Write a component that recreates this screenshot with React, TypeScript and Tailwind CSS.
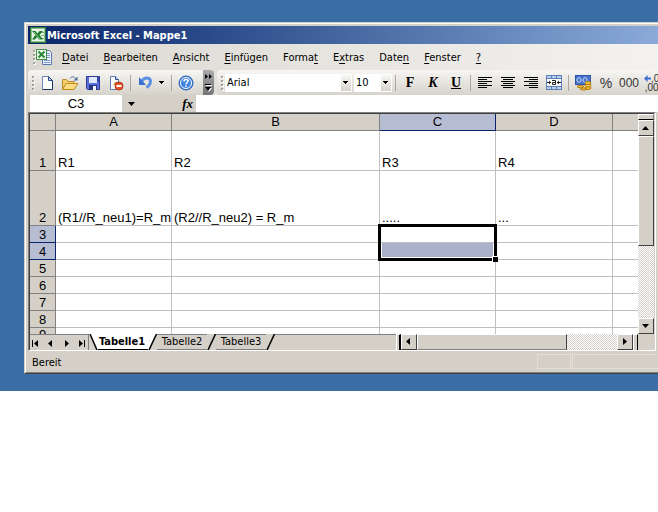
import React from "react";

const ExcelLogo = () => (
    <svg width="16" height="16" viewBox="0 0 16 16">
        <rect x="0.5" y="0.5" width="15" height="15" fill="#e9f4e6" stroke="#2f7d38" />
        <rect x="1.500" y="1.500" width="13" height="13" fill="none" stroke="#8dc48c" />
        <path d="M11 5.500h3M11 8.500h3M11 11.500h3" stroke="#6fae70" />
        <path d="M2 4h3.500L7.500 6.500 9.500 4H13L9.500 8l3.500 4.500H9L7 10l-2 2.500H2L5.500 8z" fill="#1f7a2c" />
        <path d="M4 5l6 7" stroke="#9ad79a" />
    </svg>
);

const WorkbookIcon = () => (
    <svg width="17" height="16" viewBox="0 0 17 16">
        <path d="M6.500 1.500h7l2 2v12h-9z" fill="#e8effb" stroke="#5a76b5" />
        <path d="M11 4.500h3M11 6.500h3M11 8.500h3M8 11.500h6M8 13.500h6" stroke="#7f9bd0" />
        <rect x="0.5" y="0.5" width="10" height="10" fill="#eef7ec" stroke="#3f8f47" />
        <path d="M2.500 2.500l6 6M8.500 2.500l-6 6" stroke="#2a8a35" strokeWidth="2" />
    </svg>
);

const NewIcon = () => (
    <svg width="16" height="16" viewBox="0 0 16 16">
        <path d="M3.500 1.500h6l4 4v9h-10z" fill="#fbfdff" stroke="#6f86b8" />
        <path d="M13.500 5.500v9h-10" fill="none" stroke="#1d3260" />
        <path d="M9.500 1.500v4h4z" fill="#b9cdee" stroke="#2d4a86" />
    </svg>
);

const OpenIcon = () => (
    <svg width="18" height="16" viewBox="0 0 18 16">
        <path d="M1.500 14.500v-10h4l1.500 2h6v2" fill="#f3cf6c" stroke="#b98a28" />
        <path d="M1.500 14.500l3.500-6h12l-4 6z" fill="#fbdc83" stroke="#c08a20" />
        <path d="M9 3.500c2-2.500 4-2 5.500 0" fill="none" stroke="#4a6a9a" />
        <path d="M16.500 1.500v4h-4z" fill="#4a6a9a" />
    </svg>
);

const SaveIcon = () => (
    <svg width="16" height="16" viewBox="0 0 16 16">
        <path d="M1.500 1.500h13v13h-12l-1-1z" fill="#5a6fd8" stroke="#2d3a96" />
        <rect x="4" y="2" width="8" height="6" fill="#dfe7fb" />
        <path d="M12 2h2v5h-2z" fill="#3548b5" />
        <rect x="4" y="10" width="8" height="5" fill="#27347f" />
        <rect x="8" y="11" width="3" height="4" fill="#f5f7ff" />
    </svg>
);

const PermissionIcon = () => (
    <svg width="16" height="16" viewBox="0 0 16 16">
        <path d="M2.500 1.500h5l3 3v10h-8z" fill="#fbfdff" stroke="#5f7db4" />
        <path d="M7.500 1.500v3h3" fill="#c5d6f0" stroke="#2d4a86" />
        <path d="M6 10c0-3 4-4 5-1" fill="#ebc24a" stroke="#b98a28" />
        <circle cx="11" cy="11" r="4" fill="#e0532c" stroke="#b8371a" />
        <path d="M8.500 11h5" stroke="#fff" strokeWidth="2" />
    </svg>
);

const UndoIcon = () => (
    <svg width="16" height="16" viewBox="0 0 16 16">
        <path d="M5 6c2-4 8-4 8.500 0 0 3-1.500 5-4 6.500" fill="none" stroke="#5b8fe3" strokeWidth="3" />
        <path d="M2 2v8h7z" fill="#3a70d2" />
    </svg>
);

const HelpIcon = () => (
    <svg width="16" height="16" viewBox="0 0 16 16">
        <circle cx="8" cy="8" r="7" fill="#3f82e0" stroke="#2a5fb5" />
        <circle cx="8" cy="8" r="5.500" fill="none" stroke="#fff" />
        <path d="M6 6.500c0-3 4-2.500 4-.5 0 1.500-2 1.500-2 3.500M8 10.500v1.500" fill="none" stroke="#fff" strokeWidth="1.500" />
    </svg>
);

const MergeIcon = () => (
    <svg width="16" height="16" viewBox="0 0 16 16">
        <rect x="0.5" y="0.5" width="15" height="14" fill="#b9cdec" stroke="#5f7fb8" />
        <path d="M5.500 1v3M10.500 1v3M5.500 11v4M10.500 11v4M1 3.500h14M1 11.500h14" stroke="#5f7fb8" />
        <rect x="1" y="4" width="14" height="7" fill="#fff" />
        <path d="M1 7.500h4M11 7.500h4" stroke="#222" />
        <path d="M3 5.500v4l2-2zM13 5.500v4l-2-2z" fill="#222" />
        <path d="M6 5.500h3.500v4M9.500 7.500h-3v2h3" fill="none" stroke="#222" />
    </svg>
);

const CurrencyIcon = () => (
    <svg width="18" height="16" viewBox="0 0 18 16">
        <rect x="1.500" y="0.5" width="15" height="9" fill="#4a74cc" stroke="#2f55ab" />
        <path d="M3 5c0-3 4-3 4 0s-4 3-4 0M9 5c0-3 4-3 4 0s-4 3-4 0" fill="none" stroke="#c9dbfa" />
        <g fill="#f7c83e" stroke="#b27b12">
            <ellipse cx="14" cy="13" rx="3" ry="1.500" />
            <ellipse cx="14" cy="10.500" rx="3" ry="1.500" />
            <ellipse cx="14" cy="8" rx="3" ry="1.500" />
            <ellipse cx="6.500" cy="11.500" rx="3.500" ry="1" />
            <ellipse cx="9.500" cy="14" rx="3.500" ry="1" />
        </g>
    </svg>
);

const AlignIcon = ({ d }: { d: string }) => (
    <svg width="16" height="12" viewBox="0 0 16 12" shapeRendering="crispEdges">
        <path d={d} stroke="#000" />
    </svg>
);

const Arrow = ({ dir }: { dir: "up" | "down" | "left" | "right" }) => {
    const shapes = {
        up: "M0 6h7L3.500 2z",
        down: "M0 2h7L3.500 6z",
        left: "M5 0v7L1 3.500z",
        right: "M2 0v7l4-3.500z",
    };
    return (
        <svg width="7" height="7" viewBox="0 0 7 7">
            <path d={shapes[dir]} />
        </svg>
    );
};

const SmallArrow = () => (
    <svg width="6" height="4" viewBox="0 0 6 4" shapeRendering="crispEdges">
        <path d="M0 0h5v1H4v1H3v1H2V2H1V1H0z" />
    </svg>
);

const Grip = () => (
    <svg width="3" height="16" viewBox="0 0 3 16" shapeRendering="crispEdges" className="shrink-0">
        <path d="M1 2h2v2H1zM1 6h2v2H1zM1 10h2v2H1zM1 14h2v2H1z" fill="#fff" />
        <path d="M0 1h2v2H0zM0 5h2v2H0zM0 9h2v2H0zM0 13h2v2H0z" fill="#a3a198" />
    </svg>
);

const Separator = () => <div className="mr-[2px] ml-[3px] h-4 w-px shrink-0 bg-[#a8a69c]" />;

const ToolButton = ({ label, children }: { label: string; children: React.ReactNode }) => (
    <button aria-label={label} className="flex h-6 w-[23px] shrink-0 items-center justify-center pl-px">
        {children}
    </button>
);

const ScrollButton = ({ label, dir }: { label: string; dir: "up" | "down" | "left" | "right" }) => (
    <button
        aria-label={label}
        className="flex h-4 w-4 shrink-0 items-center justify-center border border-t-white border-r-[#404040] border-b-[#404040] border-l-white bg-[#d4d0c8] pr-px pb-px"
    >
        <Arrow dir={dir} />
    </button>
);

const menuItems = [
    ["", "D", "atei"],
    ["", "B", "earbeiten"],
    ["", "A", "nsicht"],
    ["", "E", "infügen"],
    ["Forma", "t", ""],
    ["E", "x", "tras"],
    ["Date", "n", ""],
    ["", "F", "enster"],
    ["", "?", ""],
];

const columns = ["A", "B", "C", "D", ""];

const rows = [
    { height: "h-10", cells: ["R1", "R2", "R3", "R4", ""] },
    { height: "h-[55px]", cells: ["(R1//R_neu1)=R_m", "(R2//R_neu2) = R_m", ".....", "...", ""] },
    { height: "h-[17px]", cells: ["", "", "", "", ""], selected: true },
    { height: "h-[17px]", cells: ["", "", "", "", ""], selected: true },
    { height: "h-[17px]", cells: ["", "", "", "", ""] },
    { height: "h-[17px]", cells: ["", "", "", "", ""] },
    { height: "h-[17px]", cells: ["", "", "", "", ""] },
    { height: "h-[17px]", cells: ["", "", "", "", ""] },
];

// Frame around C3:C4, anchored in C3
const Selection = () => (
    <div className="absolute -top-[2px] -left-[2px] z-10 h-[37px] w-[119px] border-3 border-black">
        <div className="h-4 border-b border-[#c0c0c0] bg-white" />
        <div className="h-[15px] border border-t-0 border-white bg-[#a9b1cb]" />
        <div className="absolute -right-1 -bottom-1 h-[6px] w-[6px] border-t border-l border-white bg-black" />
    </div>
);

const TitleBar = () => (
    <div className="flex h-[18px] items-center gap-px bg-linear-to-r from-[#0a246a] to-[#8aabd8] pl-[2px] text-white">
        <ExcelLogo />
        <h1 className="pt-[2px] font-bold">Microsoft Excel - Mappe1</h1>
    </div>
);

const MenuBar = () => (
    <nav className="flex h-[26px] items-center bg-linear-to-r from-[#dbd8d1] to-[#f3f2ef] pl-[5px]">
        <Grip />
        <WorkbookIcon />
        <div className="flex gap-[15px] pt-[2px] pl-[9px]">
            {menuItems.map(([before, key, after]) => (
                <button key={before + key + after} className="whitespace-nowrap">
                    {before}
                    <span className="underline underline-offset-2">{key}</span>
                    {after}
                </button>
            ))}
        </div>
    </nav>
);

const Toolbars = () => (
    <div className="flex h-[25px] bg-linear-to-r from-[#dbd8d1] to-[#f3f2ef]">
        <div className="flex shrink-0 items-center rounded-l bg-linear-to-b from-[#f7f6f4] to-[#d6d3cb] pt-px pl-1">
            <Grip />
            <ToolButton label="Neu"><NewIcon /></ToolButton>
            <ToolButton label="Öffnen"><OpenIcon /></ToolButton>
            <ToolButton label="Speichern"><SaveIcon /></ToolButton>
            <ToolButton label="Berechtigung"><PermissionIcon /></ToolButton>
            <Separator />
            <ToolButton label="Rückgängig"><UndoIcon /></ToolButton>
            <button aria-label="Rückgängig Liste" className="flex h-6 w-3 items-center justify-center">
                <SmallArrow />
            </button>
            <Separator />
            <ToolButton label="Hilfe"><HelpIcon /></ToolButton>
            <div className="w-[6px]" />
        </div>
        <button
            aria-label="Optionen für Symbolleisten"
            className="flex w-[11px] shrink-0 flex-col items-center justify-between rounded-r bg-linear-to-b from-[#a9a9a9] to-[#747474] pt-1 pb-[3px]"
        >
            <svg width="7" height="5" viewBox="0 0 7 5">
                <path d="M0 0l3 2.500L0 5zM4 0l3 2.500L4 5z" />
            </svg>
            <svg width="7" height="8" viewBox="0 0 7 8">
                <path d="M1 1h6v1H1zM1 4h6L4 8z" fill="#fff" />
                <path d="M0 0h6v1H0zM0 3h6L3 7z" />
            </svg>
        </button>
        <div className="ml-[3px] flex min-w-0 flex-1 items-center overflow-hidden rounded-l bg-linear-to-b from-[#f7f6f4] to-[#d6d3cb] pt-px pl-1">
            <Grip />
            <div className="relative ml-px shrink-0">
                <select aria-label="Schriftart" className="block h-[18px] w-[127px] appearance-none bg-white pl-[2px]">
                    <option>Arial</option>
                </select>
                <span className="pointer-events-none absolute top-px right-px flex h-4 w-[10px] items-center justify-center bg-linear-to-b from-[#f7f6f4] to-[#d6d3cb]">
                    <SmallArrow />
                </span>
            </div>
            <div className="relative ml-[2px] shrink-0">
                <select aria-label="Schriftgrad" className="block h-[18px] w-[38px] appearance-none bg-white pl-[2px]">
                    <option>10</option>
                </select>
                <span className="pointer-events-none absolute top-px right-px flex h-4 w-[10px] items-center justify-center bg-linear-to-b from-[#f7f6f4] to-[#d6d3cb]">
                    <SmallArrow />
                </span>
            </div>
            <Separator />
            <div className="flex font-['Liberation_Serif',serif] text-sm font-bold">
                <ToolButton label="Fett">F</ToolButton>
                <ToolButton label="Kursiv"><i>K</i></ToolButton>
                <ToolButton label="Unterstrichen"><u>U</u></ToolButton>
            </div>
            <Separator />
            <ToolButton label="Linksbündig">
                <AlignIcon d="M1 .5h14M1 2.500h9M1 4.500h14M1 6.500h9M1 8.500h14M1 10.500h9" />
            </ToolButton>
            <ToolButton label="Zentriert">
                <AlignIcon d="M1 .5h14M3 2.500h10M1 4.500h14M3 6.500h10M1 8.500h14M3 10.500h10" />
            </ToolButton>
            <ToolButton label="Rechtsbündig">
                <AlignIcon d="M1 .5h14M6 2.500h9M1 4.500h14M6 6.500h9M1 8.500h14M6 10.500h9" />
            </ToolButton>
            <ToolButton label="Verbinden und zentrieren"><MergeIcon /></ToolButton>
            <Separator />
            <ToolButton label="Währung"><CurrencyIcon /></ToolButton>
            <div className="flex font-['Liberation_Sans_Narrow','Liberation_Sans',sans-serif] text-[#333]">
                <ToolButton label="Prozentformat">
                    <span className="text-sm">%</span>
                </ToolButton>
                <ToolButton label="1.000er-Trennzeichen">
                    <span className="text-xs">000</span>
                </ToolButton>
                <button
                    aria-label="Dezimalstelle hinzufügen"
                    className="ml-1 flex shrink-0 flex-col justify-center text-[10px] leading-[9px]"
                >
                    <span className="flex items-center">
                        <svg width="7" height="7" viewBox="0 0 7 7">
                            <path d="M0 3.500L3.500 0v2.500H7v2H3.500V7z" fill="#3a6fd0" />
                        </svg>
                        ,0
                    </span>
                    <span>,00</span>
                </button>
            </div>
        </div>
    </div>
);

const FormulaBar = () => (
    <div className="flex h-[17px] pl-[2px]">
        <input
            aria-label="Namenfeld"
            defaultValue="C3"
            className="w-[92px] bg-white text-center font-['Liberation_Sans',sans-serif] text-[13px]"
        />
        <button aria-label="Namen" className="flex w-[18px] items-center justify-center">
            <Arrow dir="down" />
        </button>
        <button
            aria-label="Funktion einfügen"
            className="w-14 pr-[3px] text-right font-['Liberation_Serif',serif] text-[13px] leading-4 font-bold italic"
        >
            fx
        </button>
        <input aria-label="Bearbeitungsleiste" className="min-w-0 flex-1 bg-white" />
    </div>
);

const Sheet = () => (
    <table className="w-full table-fixed border-separate border-spacing-0 bg-white font-['Liberation_Sans',sans-serif] text-[13px] leading-[14px]">
        <colgroup>
            <col className="w-[26px]" />
            <col className="w-[116px]" />
            <col className="w-[208px]" />
            <col className="w-[116px]" />
            <col className="w-[117px]" />
            <col />
        </colgroup>
        <thead>
            <tr>
                <td className="h-[17px] border-r border-b border-[#808080] bg-[#d4d0c8] p-0" />
                {columns.map((name) => (
                    <th
                        key={name}
                        className={`h-[17px] border-b p-0 font-normal ${
                            name === "C" ? "border-[#0a246a] bg-[#b6bdd2]" : "border-[#808080] bg-[#d4d0c8]"
                        } ${name ? "border-r" : ""}`}
                    >
                        {name}
                    </th>
                ))}
            </tr>
        </thead>
        <tbody>
            {rows.map((row, r) => (
                <tr key={r}>
                    <th
                        className={`${row.height} border-r border-b p-0 align-bottom font-normal ${
                            row.selected ? "border-[#0a246a] bg-[#b6bdd2]" : "border-[#808080] bg-[#d4d0c8]"
                        }`}
                    >
                        {r + 1}
                    </th>
                    {row.cells.map((text, c) => (
                        <td
                            key={c}
                            className={`relative border-b border-[#c0c0c0] py-0 pr-0 pl-[2px] align-bottom whitespace-nowrap ${
                                c < 4 ? "border-r" : ""
                            }`}
                        >
                            {text}
                            {r === 2 && c === 2 && <Selection />}
                        </td>
                    ))}
                </tr>
            ))}
            <tr>
                <th className="border-r border-[#808080] bg-[#d4d0c8] p-0 font-normal">
                    <div className="h-[6px] overflow-hidden">9</div>
                </th>
                {columns.map((name) => (
                    <td key={name} className={`border-[#c0c0c0] p-0 ${name ? "border-r" : ""}`} />
                ))}
            </tr>
        </tbody>
    </table>
);

const VerticalScroll = () => (
    <div className="flex w-4 shrink-0 flex-col bg-[repeating-conic-gradient(#d4d0c8_0_25%,#fff_0_50%)] bg-[length:2px_2px]">
        <div className="h-[6px] border-t border-r border-b border-l border-t-white border-r-[#808080] border-b-black border-l-white bg-[#d4d0c8]" />
        <ScrollButton label="Nach oben" dir="up" />
        <div className="h-[110px] border border-t-white border-r-[#404040] border-b-[#404040] border-l-white bg-[#d4d0c8]" />
        <div className="flex-1" />
        <ScrollButton label="Nach unten" dir="down" />
    </div>
);

const NavButton = ({ label, d }: { label: string; d: string }) => (
    <button aria-label={label} className="flex h-4 w-3 items-center justify-center">
        <svg width="8" height="7" viewBox="0 0 8 7">
            <path d={d} />
        </svg>
    </button>
);

const Slant = ({ left }: { left: string }) => (
    <svg width="9" height="16" viewBox="0 0 9 16" className="shrink-0">
        <path d="M0 0h9L1 16H0z" fill={left} />
        <path d="M8.500 0L1 16" stroke="#000" strokeWidth="1.500" />
    </svg>
);

const SheetBar = () => (
    <div className="flex h-4">
        <div className="flex min-w-0 flex-1">
            <div className="flex w-[59px] shrink-0 gap-1 border-t border-r border-[#808080]">
                <NavButton label="Erstes Blatt" d="M0 0h1v7H0zM6 0v7L2 3.500z" />
                <NavButton label="Vorheriges Blatt" d="M5 0v7L1 3.500z" />
                <NavButton label="Nächstes Blatt" d="M2 0v7l4-3.500z" />
                <NavButton label="Letztes Blatt" d="M1 0v7l4-3.500zM6 0h1v7H6z" />
            </div>
            <svg width="9" height="16" viewBox="0 0 9 16" className="shrink-0">
                <path d="M0 0h9v16H8z" fill="#fff" />
                <path d="M1 0l7 16" stroke="#000" strokeWidth="1.500" />
            </svg>
            <button className="w-[50px] border-b border-black bg-white pr-[2px] font-bold">Tabelle1</button>
            <Slant left="#fff" />
            <button className="w-[50px] border-t border-b border-t-[#808080] border-b-[#808080]">Tabelle2</button>
            <Slant left="#d4d0c8" />
            <button className="w-[50px] border-t border-b border-t-[#808080] border-b-[#808080]">Tabelle3</button>
            <Slant left="#d4d0c8" />
            <div className="flex-1 border-t border-[#808080]" />
        </div>
        <div className="flex w-[258px] shrink-0">
            <div className="w-[5px] border-t border-r-2 border-l border-t-white border-r-black border-l-white" />
            <ScrollButton label="Nach links" dir="left" />
            <div className="flex flex-1 bg-[repeating-conic-gradient(#d4d0c8_0_25%,#fff_0_50%)] bg-[length:2px_2px]">
                <div className="w-[150px] border border-t-white border-r-[#404040] border-b-[#808080] border-l-white bg-[#d4d0c8]" />
            </div>
            <ScrollButton label="Nach rechts" dir="right" />
            <div className="w-[5px] border-t border-r border-l border-t-white border-r-black border-l-white" />
            <div className="w-4" />
        </div>
    </div>
);

const StatusBar = () => (
    <footer className="flex h-[21px] items-center pl-1">
        <span className="flex-1 pt-[2px]">Bereit</span>
        <div className="h-[15px] w-[34px] border border-[#e2dfd9]" />
        <div className="ml-px h-[15px] w-[86px] border border-r-0 border-[#e2dfd9]" />
    </footer>
);

const App: React.FC = () => {
    return (
        <div className="overflow-hidden bg-[#3a6ea5] pt-[22px] pb-[17px] pl-6 font-['DejaVu_Sans_Condensed','DejaVu_Sans',sans-serif] text-[11px] leading-[14px] text-black">
            <div className="border-t border-b border-l border-t-[#d4d0c8] border-b-[#404040] border-l-[#d4d0c8]">
                <div className="border-t border-b border-l border-t-white border-b-[#808080] border-l-white bg-[#d4d0c8] pt-[2px] pl-[2px]">
                    <TitleBar />
                    <MenuBar />
                    <Toolbars />
                    <FormulaBar />
                    <main className="mr-[2px] border border-t-[#808080] border-r-white border-b-white border-l-[#808080]">
                        <div className="mr-px border-t border-l border-[#404040]">
                            <div className="flex">
                                <div className="min-w-0 flex-1">
                                    <Sheet />
                                </div>
                                <VerticalScroll />
                            </div>
                            <SheetBar />
                        </div>
                    </main>
                    <StatusBar />
                </div>
            </div>
        </div>
    );
};

export default App;
